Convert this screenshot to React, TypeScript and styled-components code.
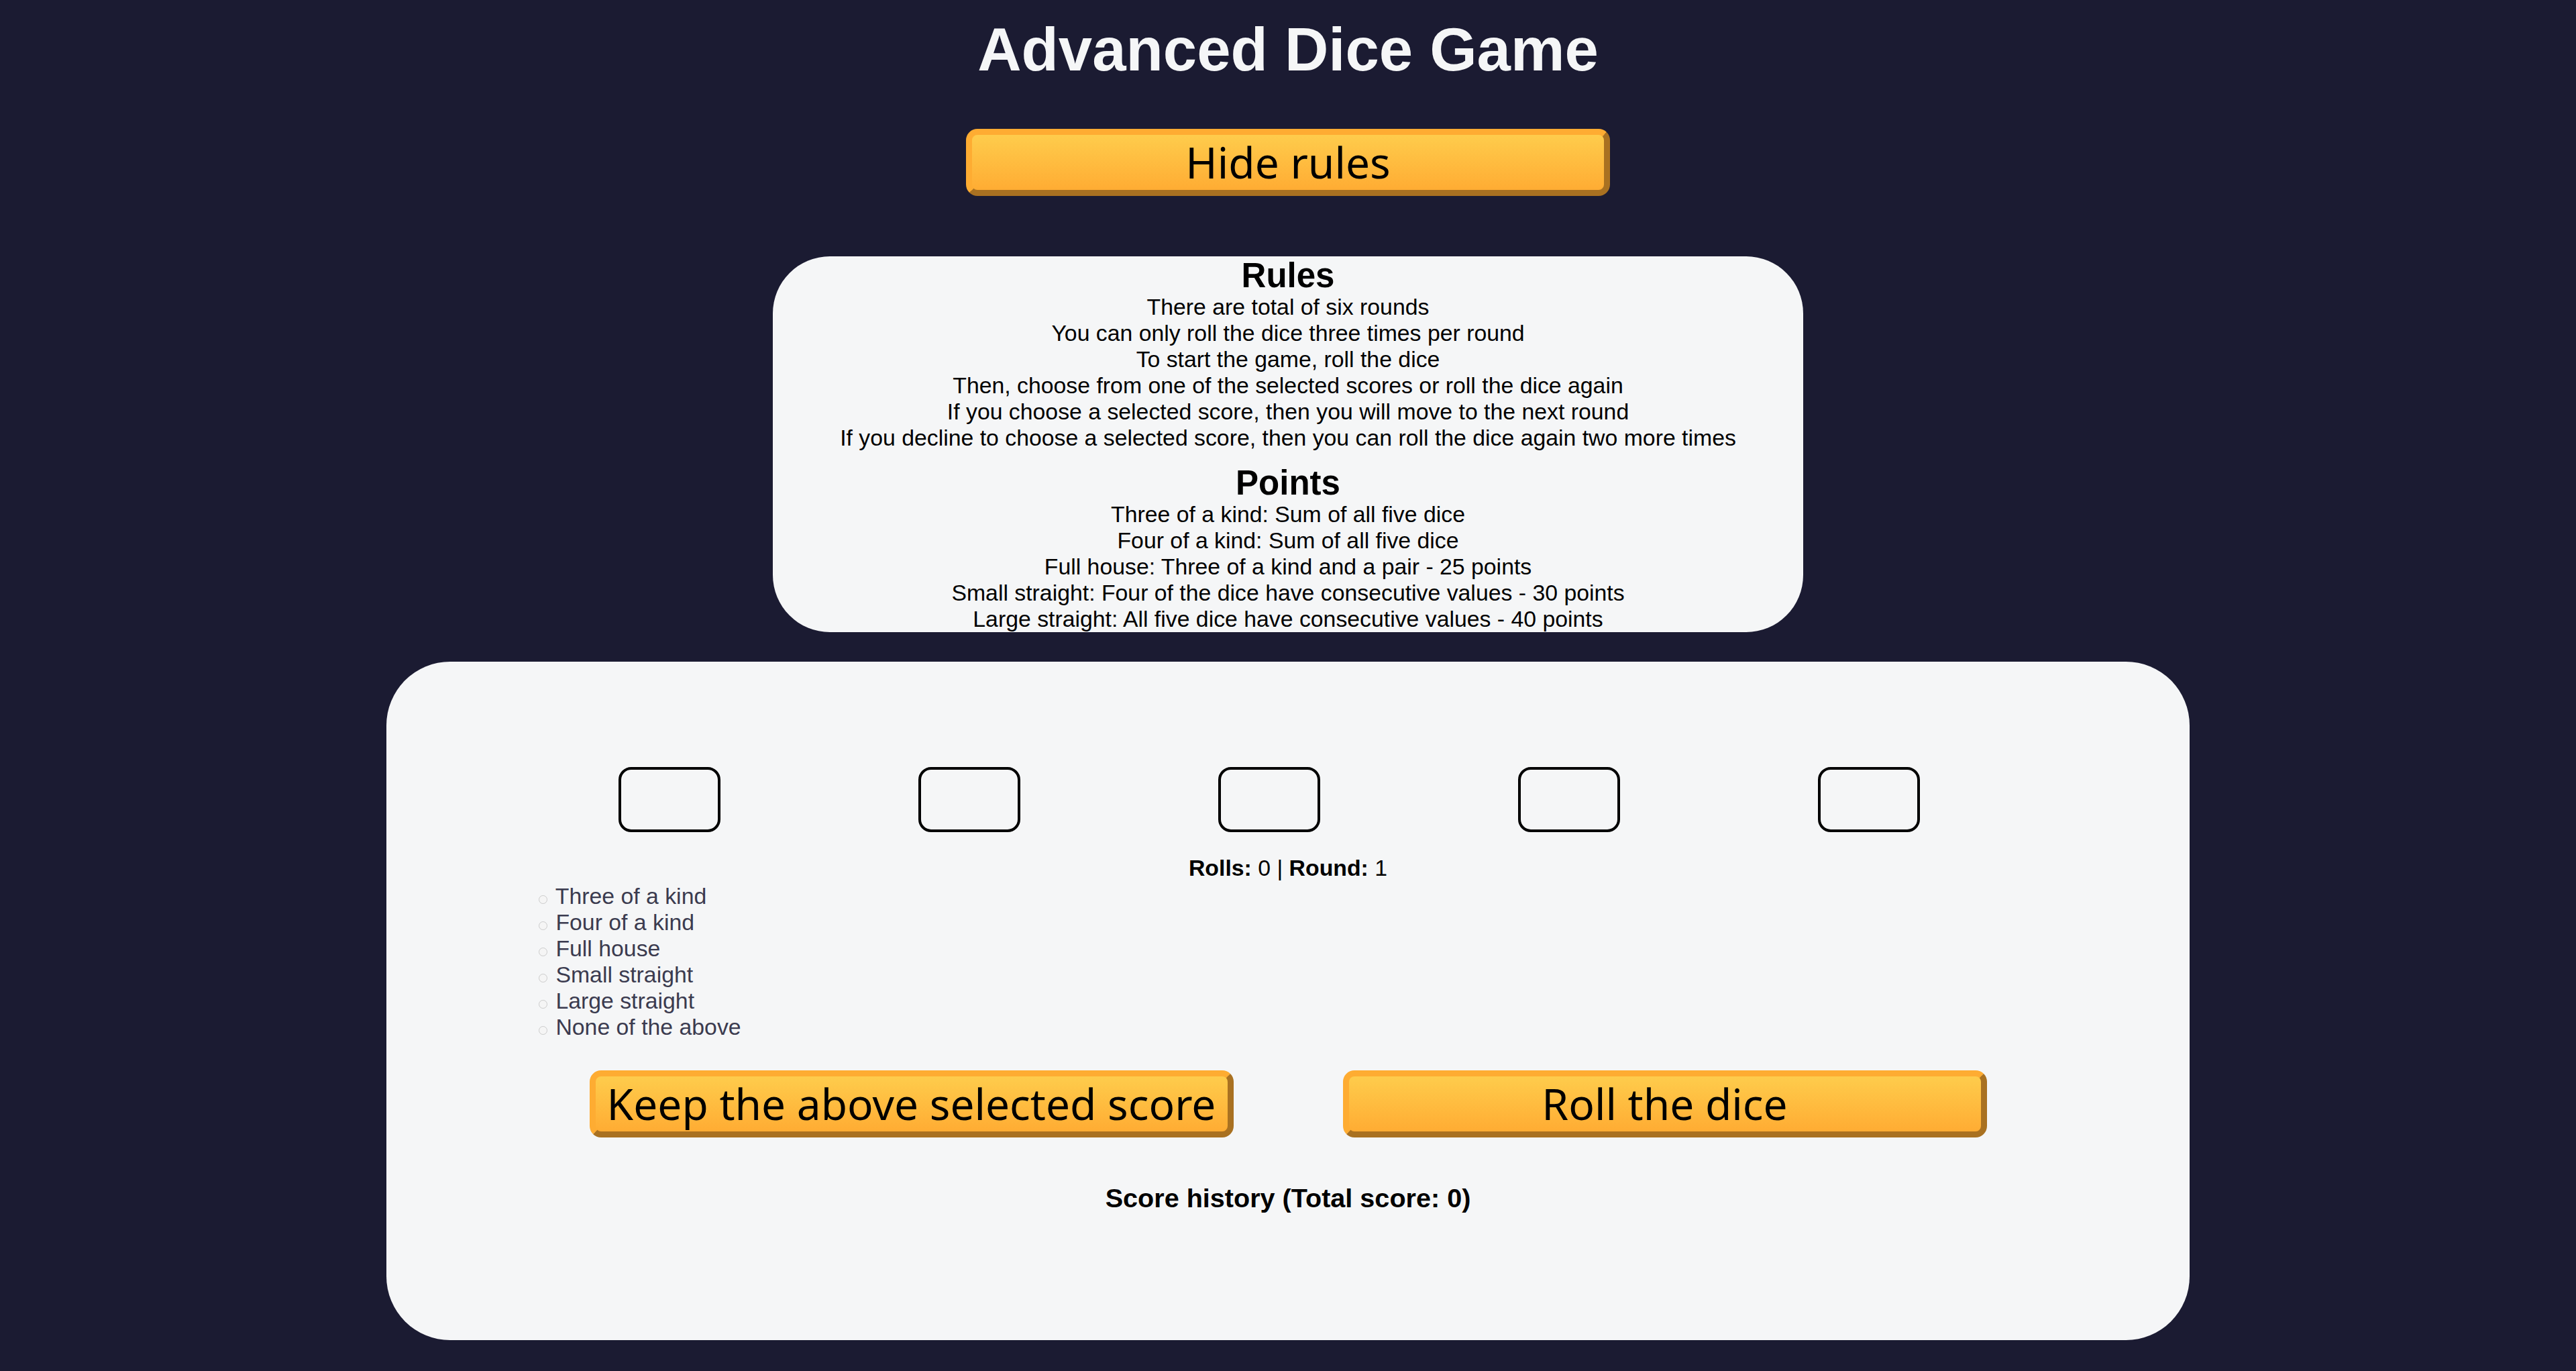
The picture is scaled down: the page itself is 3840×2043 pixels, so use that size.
import React from 'react';
import styled, { createGlobalStyle } from 'styled-components';

const GlobalStyle = createGlobalStyle`
  *, *::before, *::after {
    margin: 0;
    padding: 0;
    box-sizing: border-box;
  }
  body {
    background-color: #1b1b32;
    font-family: "Liberation Sans", Arial, sans-serif;
    font-size: 33.8px;
    color: #000;
  }
`

const Header = styled.header`
  color: #f5f6f7;
  text-align: center;
  padding-top: 22px;
`
const Title = styled.h1`
  font-size: 90.5px;
  font-weight: 700;
  line-height: normal;
`
const GoldButton = styled.button`
  display: block;
  width: 960px;
  height: 100px;
  padding: 0;
  cursor: pointer;
  color: #000;
  font-family: "Noto Sans", "Open Sans", sans-serif;
  font-size: 64px;
  line-height: 1;
  background-color: #feac32;
  background-image: linear-gradient(#fecc4c, #ffac33);
  border-width: 9px;
  border-style: solid;
  border-color: #feac32 #a97121 #a97121 #feac32;
  border-radius: 17px;
`
const RulesToggle = styled(GoldButton)`
  margin: 66px auto 0;
`
const RulesBox = styled.section`
  width: 1536px;
  margin: 90px auto 0;
  padding-top: 2px;
  background-color: #f5f6f7;
  border-radius: 85px;
  text-align: center;
`
const RulesHeading = styled.h2<{ $spaced?: boolean }>`
  font-size: 51px;
  font-weight: 700;
  line-height: 54px;
  margin-top: ${p => (p.$spaced ? '21px' : '0')};
`
const RulesList = styled.ul`
  list-style: none;
  line-height: normal;
`
const Game = styled.main`
  width: 2688px;
  height: 1011px;
  margin: 44px auto 0;
  padding-top: 157px;
  background-color: #f5f6f7;
  border-radius: 95px;
`
const DiceRow = styled.div`
  display: flex;
  gap: 295px;
  padding-left: 346px;
`
const Die = styled.div`
  width: 152px;
  height: 97px;
  border: 4px solid #000;
  border-radius: 19px;
`
const Status = styled.p`
  margin-top: 34px;
  text-align: center;
  line-height: normal;
`
const ScoreOptions = styled.div`
  margin-top: 3px;
  padding-left: 222px;
  color: #3b3b4f;
  line-height: normal;
`
const Radio = styled.input`
  margin: 3px 3px 0 5px;
`
const ButtonRow = styled.div`
  display: flex;
  justify-content: center;
  gap: 163px;
  margin-top: 45px;
`
const History = styled.h3`
  margin-top: 68px;
  text-align: center;
  font-size: 39.6px;
  font-weight: 700;
  line-height: normal;
`

const rules = [
  'There are total of six rounds',
  'You can only roll the dice three times per round',
  'To start the game, roll the dice',
  'Then, choose from one of the selected scores or roll the dice again',
  'If you choose a selected score, then you will move to the next round',
  'If you decline to choose a selected score, then you can roll the dice again two more times',
]
const points = [
  'Three of a kind: Sum of all five dice',
  'Four of a kind: Sum of all five dice',
  'Full house: Three of a kind and a pair - 25 points',
  'Small straight: Four of the dice have consecutive values - 30 points',
  'Large straight: All five dice have consecutive values - 40 points',
]
const options = [
  'Three of a kind',
  'Four of a kind',
  'Full house',
  'Small straight',
  'Large straight',
  'None of the above',
]

const App = () => {
  return (
    <>
      <GlobalStyle />
      <Header>
        <Title>Advanced Dice Game</Title>
      </Header>
      <RulesToggle>Hide rules</RulesToggle>
      <RulesBox>
        <RulesHeading>Rules</RulesHeading>
        <RulesList>
          {rules.map(r => <li key={r}>{r}</li>)}
        </RulesList>
        <RulesHeading $spaced>Points</RulesHeading>
        <RulesList>
          {points.map(p => <li key={p}>{p}</li>)}
        </RulesList>
      </RulesBox>
      <Game>
        <DiceRow>
          {[0, 1, 2, 3, 4].map(i => <Die key={i} />)}
        </DiceRow>
        <Status>
          <strong>Rolls:</strong> 0 | <strong>Round:</strong> 1
        </Status>
        <ScoreOptions>
          {options.map((o, i) => (
            <div key={o}>
              <Radio type="radio" name="score-options" id={'opt' + i} disabled />{' '}
              <label htmlFor={'opt' + i}>{o}</label>
            </div>
          ))}
        </ScoreOptions>
        <ButtonRow>
          <GoldButton>Keep the above selected score</GoldButton>
          <GoldButton>Roll the dice</GoldButton>
        </ButtonRow>
        <History>Score history (Total score: 0)</History>
      </Game>
    </>
  )
}

export default App
